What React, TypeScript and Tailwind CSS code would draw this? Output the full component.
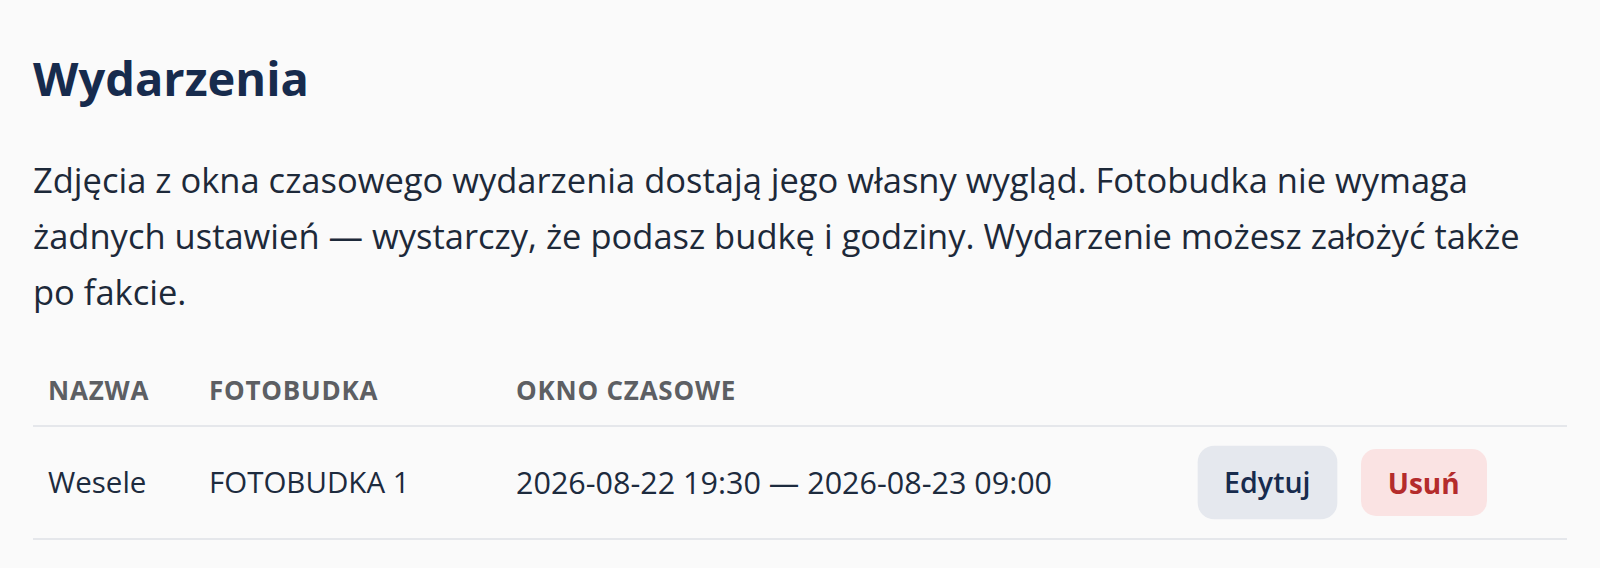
import { useState } from 'react'

type EventRow = {
  id: number
  name: string
  booth: string
  start: string
  end: string
}

const events: EventRow[] = [
  { id: 1, name: 'Wesele', booth: 'FOTOBUDKA 1', start: '2026-08-22 19:30', end: '2026-08-23 09:00' },
]

const columns = [
  { label: 'Nazwa', width: 'w-[161px]' },
  { label: 'Fotobudka', width: 'w-[307px]' },
  { label: 'Okno czasowe', width: 'w-[688px]' },
  { label: '', width: '' },
]

const App = () => {
  const [rows, setRows] = useState<EventRow[]>(events)

  const handleDelete = (id: number) => {
    setRows((prev) => prev.filter((row) => row.id !== id))
  }

  return (
    <div className="min-h-screen bg-[#fafafa] font-['Open_Sans',sans-serif]">
      <div className="px-[33px] pt-[50px]">
        <h1 className="text-[47px] leading-[56px] font-bold text-[#172b4d]">Wydarzenia</h1>

        <p className="mt-[46px] max-w-[1510px] text-[34.5px] leading-[56px] text-[#1d2939]">
          Zdjęcia z okna czasowego wydarzenia dostają jego własny wygląd. Fotobudka nie wymaga
          żadnych ustawień — wystarczy, że podasz budkę i godziny. Wydarzenie możesz założyć także
          po fakcie.
        </p>

        <table className="mt-[35px] w-full border-collapse text-left">
          <thead>
            <tr className="border-b-2 border-[#e5e7eb]">
              {columns.map((col) => (
                <th
                  key={col.label}
                  className={`${col.width} px-[15px] pt-[19px] pb-[19px] text-[26px] leading-[32px] font-bold uppercase tracking-[0.03em] text-[#5d5f63]`}
                >
                  {col.label}
                </th>
              ))}
            </tr>
          </thead>
          <tbody>
            {rows.map((row) => (
              <tr key={row.id} className="border-b-2 border-[#e5e7eb]">
                <td className="px-[15px] py-[22px] align-middle text-[29.5px] text-[#1d2b3e]">{row.name}</td>
                <td className="px-[15px] py-[22px] align-middle text-[29.5px] text-[#1d2b3e]">{row.booth}</td>
                <td className="px-[15px] py-[22px] align-middle text-[30.5px] text-[#1d2b3e]">
                  {row.start} — {row.end}
                </td>
                <td className="px-[15px] py-[22px] align-middle">
                  <div className="flex items-center gap-[30px]">
                    <button className="h-[67px] min-w-[126px] scale-110 rounded-[15px] bg-[#e5e8ee] px-6 text-[26px] font-semibold text-[#172b4d]">
                      Edytuj
                    </button>
                    <button
                      onClick={() => handleDelete(row.id)}
                      className="h-[67px] min-w-[126px] rounded-[15px] bg-[#fae3e3] px-6 text-[28px] font-bold text-[#b42c2c]"
                    >
                      Usuń
                    </button>
                  </div>
                </td>
              </tr>
            ))}
          </tbody>
        </table>
      </div>
    </div>
  )
}

export default App
